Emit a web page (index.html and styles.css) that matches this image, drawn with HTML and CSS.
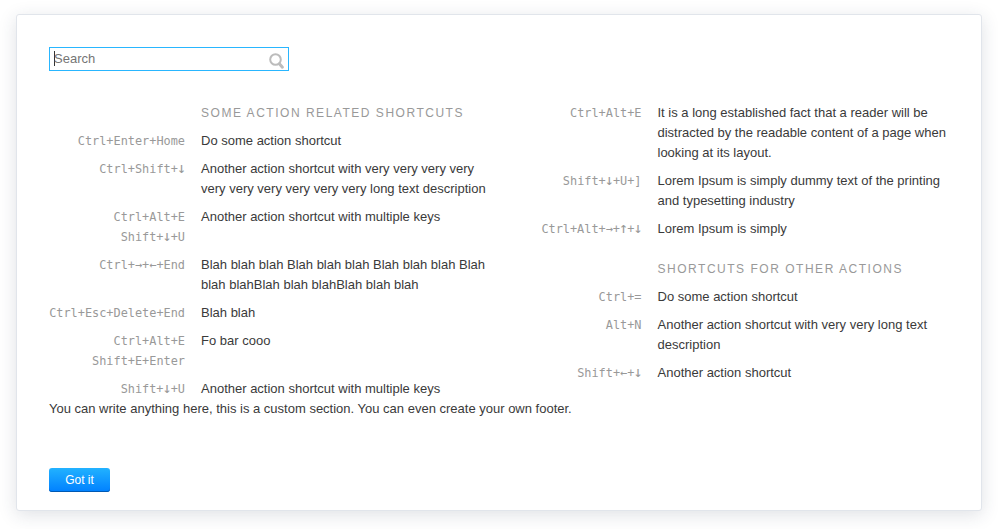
FILE: index.html
```html
<!DOCTYPE html>
<html lang="en">
<head>
<meta charset="utf-8">
<title>Keyboard shortcuts</title>
<link rel="stylesheet" href="styles.css">
</head>
<body>
<main class="dialog">
  <div class="search">
    <span class="caret"></span>
    <span class="placeholder">Search</span>
    <svg class="search-icon" width="16" height="17" viewBox="0 0 16 17"><circle cx="6.5" cy="6.5" r="5.3" fill="none" stroke="#bcbcbc" stroke-width="2"/><path d="M10.6 11 13.4 14.2" stroke="#bcbcbc" stroke-width="3" stroke-linecap="round"/></svg>
  </div>
  <div class="columns">
    <dl class="list">
      <dd class="heading">Some action related shortcuts</dd>
      <dt>Ctrl+Enter+Home</dt><dd>Do some action shortcut</dd>
      <dt>Ctrl+Shift+<span class="tall">↓</span></dt><dd>Another action shortcut with very very very very very very very very very very long text description</dd>
      <dt>Ctrl+Alt+E<br>Shift+<span class="tall">↓</span>+U</dt><dd>Another action shortcut with multiple keys</dd>
      <dt>Ctrl+→+←+End</dt><dd>Blah blah blah Blah blah blah Blah blah blah Blah blah blahBlah blah blahBlah blah blah</dd>
      <dt>Ctrl+Esc+Delete+End</dt><dd>Blah blah</dd>
      <dt>Ctrl+Alt+E<br>Shift+E+Enter</dt><dd>Fo bar cooo</dd>
      <dt>Shift+<span class="tall">↓</span>+U</dt><dd>Another action shortcut with multiple keys</dd>
    </dl>
    <dl class="list">
      <dt>Ctrl+Alt+E</dt><dd>It is a long established fact that a reader will be distracted by the readable content of a page when looking at its layout.</dd>
      <dt>Shift+<span class="tall">↓</span>+U+]</dt><dd>Lorem Ipsum is simply dummy text of the printing and typesetting industry</dd>
      <dt>Ctrl+Alt+→+<span class="tall">↑</span>+<span class="tall">↓</span></dt><dd>Lorem Ipsum is simply</dd>
      <dd class="heading spaced">Shortcuts for other actions</dd>
      <dt>Ctrl+=</dt><dd>Do some action shortcut</dd>
      <dt>Alt+N</dt><dd>Another action shortcut with very very long text description</dd>
      <dt>Shift+←+<span class="tall">↓</span></dt><dd>Another action shortcut</dd>
    </dl>
  </div>
  <p class="note">You can write anything here, this is a custom section. You can even create your own footer.</p>
  <button class="confirm">Got it</button>
</main>
</body>
</html>
```
FILE: styles.css
```css
body {
  margin: 0;
  padding: 14px 16px 18px;
  background: #fff;
  color: #3a3a3a;
  font: 13px/20px "Liberation Sans", Arial, sans-serif;
}

.dialog {
  box-sizing: border-box;
  height: 497px;
  padding: 32px;
  border: 1px solid #e1e5eb;
  border-radius: 3px;
  background: #fff;
  box-shadow: 0 4px 18px rgba(40, 55, 80, 0.15);
}

.search {
  box-sizing: border-box;
  display: flex;
  align-items: flex-start;
  width: 240px;
  height: 24px;
  padding: 3px 4px;
  border: 1px solid #29b6ff;
}

.caret {
  width: 1px;
  height: 15px;
  margin-right: -1px;
  background: #333;
}

.placeholder {
  line-height: 16px;
  color: #757575;
}

.search-icon {
  margin: 2px -1px 0 auto;
}

.columns {
  display: grid;
  grid-template-columns: 1fr 1fr;
  column-gap: 13px;
  margin-top: 32px;
}

.list {
  display: grid;
  grid-template-columns: 136px 1fr;
  align-content: start;
  gap: 8px 16px;
  margin: 0;
}

dt {
  color: #999;
  font-family: "DejaVu Sans Mono", monospace;
  font-size: 11.88px;
  text-align: right;
  white-space: nowrap;
}

dd {
  margin: 0;
}

/* Vertical arrows are enlarged but keep one character cell of width */
.tall {
  margin: 0 -0.94px;
  font-size: 15px;
  line-height: 0;
}

.heading {
  grid-column: 2;
  color: #999;
  font-size: 12px;
  letter-spacing: 1.52px;
  text-transform: uppercase;
}

.spaced {
  margin-top: 12px;
}

.note {
  margin: 0 0 49px;
}

.confirm {
  display: block;
  width: 61px;
  height: 24px;
  padding: 0;
  border: 0;
  border-radius: 3px;
  background: linear-gradient(#22b2ff, #0080ff);
  box-shadow: inset 0 -1px #0059b3;
  color: #fff;
  font: 12px/24px "Liberation Sans", Arial, sans-serif;
}
```
